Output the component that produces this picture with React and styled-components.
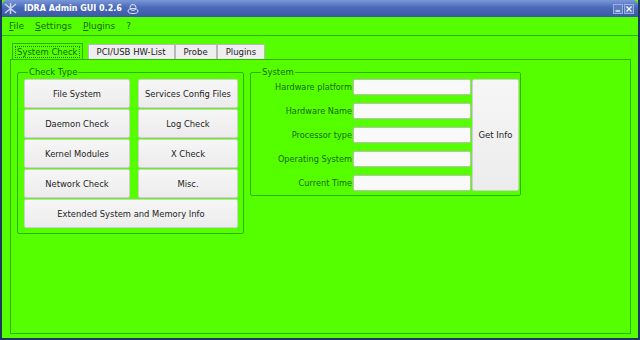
import styled, { createGlobalStyle } from "styled-components";

const Global = createGlobalStyle`
    html, body { margin: 0; padding: 0; background: #1d3a66; }
    body { font-family: "DejaVu Sans", "Liberation Sans", sans-serif; }
`;

const GREEN = "#55ff00";
const LINE = "#2fb300";
const TEXT = "#176b00";

const Window = styled.div`
    width: 640px;
    height: 340px;
    box-sizing: border-box;
    display: flex;
    flex-direction: column;
    background: ${GREEN};
    border: 2px solid #1c3760;
    border-top: none;
    overflow: hidden;
`;
const TitleBar = styled.div`
    height: 17px;
    flex: none;
    display: flex;
    align-items: center;
    padding: 0 4px 0 2px;
    background: linear-gradient(#7a98d8, #4a69b8 45%, #3b58a4);
    border-radius: 5px 5px 0 0;
    color: white;
    font-size: 8px;
    font-weight: bold;
    gap: 5px;
`;
const Title = styled.span`
    margin-left: 2px;
`;
const TitleButtons = styled.div`
    margin-left: auto;
    display: flex;
    gap: 1px;
`;
const TitleButton = styled.div`
    width: 10px;
    height: 10px;
    box-sizing: border-box;
    border: 1px solid #9bb0dc;
    background: #5d7cc2;
    display: flex;
    align-items: center;
    justify-content: center;
`;
const MenuBar = styled.div`
    height: 18px;
    flex: none;
    display: flex;
    align-items: center;
    gap: 11px;
    padding: 0 7px;
    border-bottom: 1px solid ${LINE};
    color: ${TEXT};
    font-size: 9px;
    u { text-decoration: underline; }
`;
const Body = styled.div`
    flex: 1;
    display: flex;
    flex-direction: column;
    padding: 7px 7px 4px 8px;
`;
const TabBar = styled.div`
    display: flex;
    padding-left: 2px;
    height: 16px;
    align-items: flex-end;
`;
const Tab = styled.div`
    height: ${p => (p.$active ? 16 : 15)}px;
    box-sizing: border-box;
    display: flex;
    align-items: center;
    padding: 0 ${p => (p.$active ? 2 : 8)}px;
    background: ${p => (p.$active ? GREEN : "#efefef")};
    border: 1px solid ${p => (p.$active ? LINE : "#b9b9b9")};
    border-bottom: none;
    color: ${p => (p.$active ? TEXT : "#222")};
    font-size: 8.5px;
    margin-right: ${p => (p.$active ? 5 : 0)}px;
`;
const Focus = styled.span`
    border: 1px dotted #2a7a10;
    padding: 0 1px;
`;
const Pane = styled.div`
    flex: 1;
    border: 1px solid ${LINE};
    display: flex;
    align-items: flex-start;
    gap: 6px;
    padding: 8px 6px;
`;
const Group = styled.fieldset`
    margin: 0;
    border: 1px solid ${LINE};
    border-radius: 2px;
    padding: ${p => p.$pad};
    min-width: 0;
    legend {
        padding: 0 1px;
        margin-left: 4px;
        color: ${TEXT};
        font-size: 8.5px;
        line-height: 9px;
    }
`;
const ButtonGrid = styled.div`
    display: grid;
    grid-template-columns: 106px 100px;
    grid-auto-rows: 29px;
    column-gap: 8px;
    row-gap: 1px;
`;
const Button = styled.div`
    display: flex;
    align-items: center;
    justify-content: center;
    box-sizing: border-box;
    background: linear-gradient(#f6f6f6, #ececec);
    border: 1px solid #cfcfcf;
    border-radius: 2px;
    color: #222;
    font-size: 8.4px;
    white-space: nowrap;
    grid-column: ${p => (p.$wide ? "1 / span 2" : "auto")};
`;
const SysGrid = styled.div`
    display: grid;
    grid-template-columns: 95px 118px 47px;
    grid-auto-rows: 16px;
    row-gap: 8px;
    column-gap: 1px;
`;
const Label = styled.div`
    text-align: right;
    color: ${TEXT};
    font-size: 8.2px;
    line-height: 16px;
    white-space: nowrap;
`;
const Input = styled.div`
    background: #f9f9f9;
    border: 1px solid #bdbdbd;
    border-radius: 2px;
`;
const GetInfo = styled(Button)`
    grid-column: 3;
    grid-row: 1 / span 5;
    font-size: 8.5px;
`;

const checks = [
    "File System", "Services Config Files",
    "Daemon Check", "Log Check",
    "Kernel Modules", "X Check",
    "Network Check", "Misc.",
];
const fields = ["Hardware platform", "Hardware Name", "Processor type", "Operating System", "Current Time"];

export default function App() {
    return (
        <Window>
            <Global />
            <TitleBar>
                <svg width="13" height="13" viewBox="0 0 13 13">
                    <path d="M1 2 L12 11 M12 2 L1 11 M6.5 1 L6.5 12" stroke="#c8d2e8" strokeWidth="1.6" />
                </svg>
                <Title>IDRA Admin GUI 0.2.6</Title>
                <svg width="12" height="12" viewBox="0 0 12 12">
                    <ellipse cx="6" cy="8" rx="5" ry="2.5" fill="none" stroke="#dfe6f5" strokeWidth="1" />
                    <circle cx="6" cy="4.5" r="3" fill="none" stroke="#dfe6f5" strokeWidth="1" />
                </svg>
                <TitleButtons>
                    <TitleButton>
                        <svg width="6" height="6" viewBox="0 0 6 6"><path d="M0.5 5 H5" stroke="#fff" strokeWidth="1.2" /></svg>
                    </TitleButton>
                    <TitleButton>
                        <svg width="6" height="6" viewBox="0 0 6 6"><path d="M0.5 0.5 L5.5 5.5 M5.5 0.5 L0.5 5.5" stroke="#fff" strokeWidth="1.2" /></svg>
                    </TitleButton>
                </TitleButtons>
            </TitleBar>
            <MenuBar>
                <span><u>F</u>ile</span>
                <span><u>S</u>ettings</span>
                <span><u>P</u>lugins</span>
                <span>?</span>
            </MenuBar>
            <Body>
                <TabBar>
                    <Tab $active><Focus>System Check</Focus></Tab>
                    <Tab>PCI/USB HW-List</Tab>
                    <Tab>Probe</Tab>
                    <Tab>Plugins</Tab>
                </TabBar>
                <Pane>
                    <Group $pad="2px 5px 5px 6px">
                        <legend>Check Type</legend>
                        <ButtonGrid>
                            {checks.map(c => <Button key={c}>{c}</Button>)}
                            <Button $wide>Extended System and Memory Info</Button>
                        </ButtonGrid>
                    </Group>
                    <Group $pad="2px 1px 4px 6px">
                        <legend>System</legend>
                        <SysGrid>
                            {fields.map((f, i) => [
                                <Label key={f} style={{ gridRow: i + 1 }}>{f}</Label>,
                                <Input key={f + "-in"} style={{ gridRow: i + 1 }} />,
                            ])}
                            <GetInfo>Get Info</GetInfo>
                        </SysGrid>
                    </Group>
                </Pane>
            </Body>
        </Window>
    );
}
